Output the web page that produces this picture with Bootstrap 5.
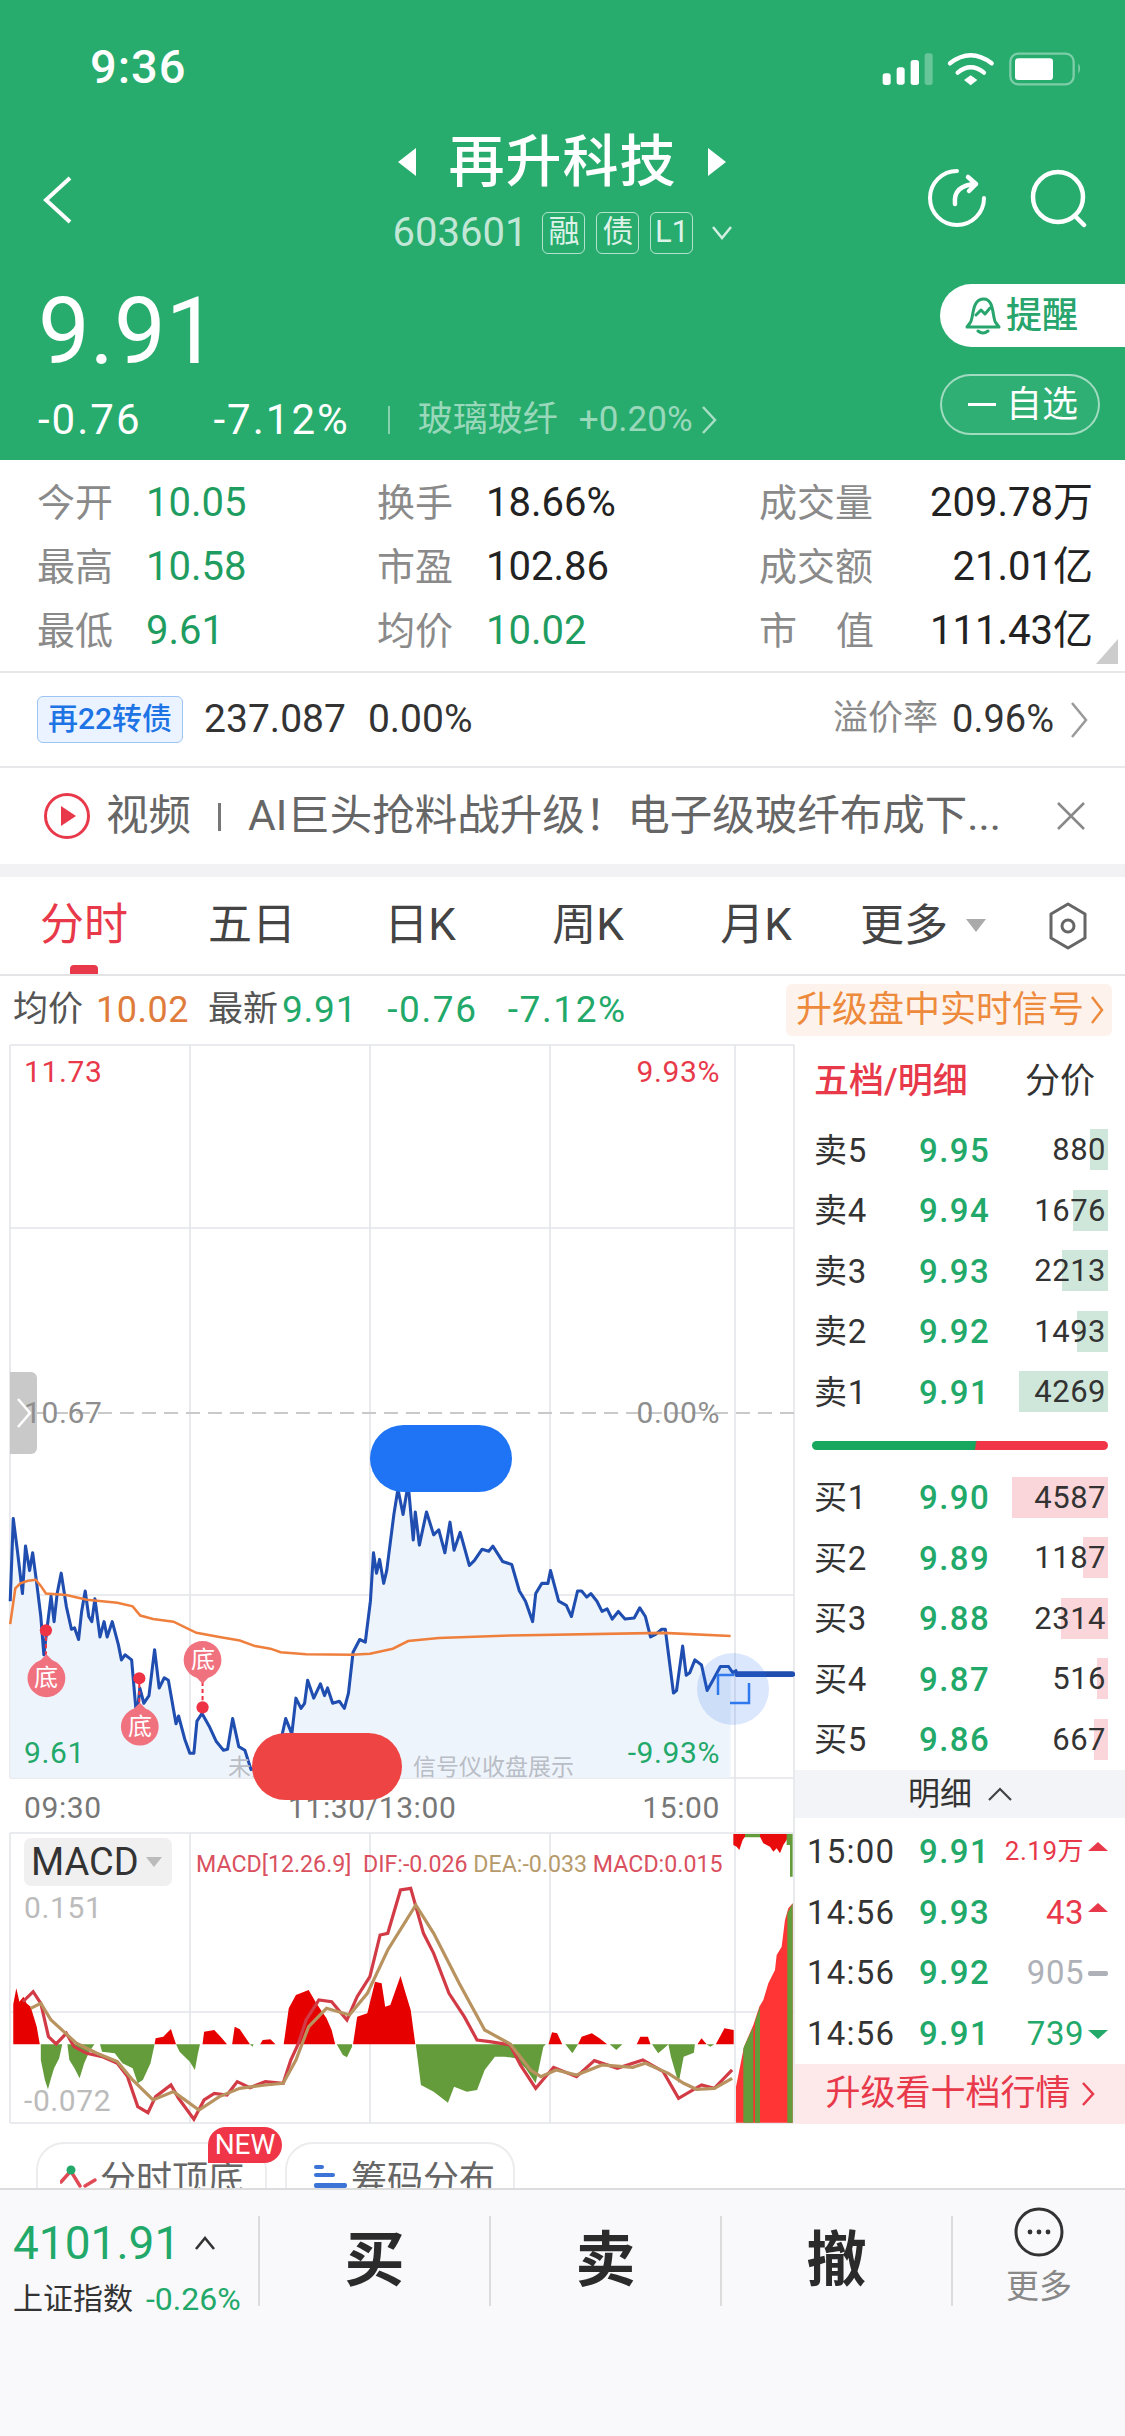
<!doctype html>
<html lang="zh-CN">
<head>
<meta charset="utf-8">
<title>再升科技</title>
<link href="https://cdn.jsdelivr.net/npm/bootstrap@5.3.0/dist/css/bootstrap.min.css" rel="stylesheet">
<style>
:root{--up:#e8394a;--down:#22a96a;--head:#27ac6e;--line:#e4e5e9}
html,body{margin:0;background:#fff}
body{width:1125px;height:2436px;overflow:hidden;font-family:"Roboto","Noto Sans CJK SC",sans-serif;color:#333}
svg{display:block}
.hd{height:460px;background:var(--head);color:#fff}
.hd-status{height:130px;padding:30px 0 0 90px}
.hd-time{font-size:47px;line-height:74px;font-weight:500;letter-spacing:1px}
.hd-nav{height:130px;display:grid;grid-template-columns:1fr auto 1fr}
.hd-back{padding:46px 0 0 42px}
.hd-title{font-size:56px;line-height:64px;font-weight:500;gap:30px;letter-spacing:1px}
.hd-code{font-size:40px;line-height:46px;margin-top:16px;color:rgba(255,255,255,.72);gap:11px}
.code-tag{width:43px;height:42px;border:1.5px solid rgba(255,255,255,.65);border-radius:6px;font-size:31px;line-height:38px;text-align:center;color:rgba(255,255,255,.85)}
.hd-icons{gap:41px;padding:38px 37px 0 0}
.hd-main{height:200px}
.hd-left{padding-left:38px}
.hd-price{font-size:92px;line-height:92px;margin-top:26px}
.hd-sub{font-size:42px;line-height:50px;margin-top:17px;letter-spacing:2px}
.hd-chg{margin-left:72px}
.hd-sep{width:2px;height:28px;background:rgba(255,255,255,.45);margin:0 28px 0 38px}
.hd-sector{font-size:35px;letter-spacing:0;color:rgba(255,255,255,.55)}
.hd-sector span{margin-left:21px}
.hd-right{width:185px;padding-top:24px;gap:27px}
.pill-alert{height:63px;border-radius:32px 0 0 32px;background:#fff;color:#27a56c;font-size:36px;font-weight:500;padding-left:25px;gap:5px}
.pill-watch{height:61px;width:160px;border:2px solid rgba(255,255,255,.55);border-radius:31px;font-size:36px;padding-left:26px;gap:10px;background:rgba(255,255,255,.04)}
.pill-dash{width:28px;height:3px;background:#fff}
.stats{height:213px;padding:11px 32px 0 37px;border-bottom:2px solid #e8e8ea;position:relative;font-size:40px}
.st-row{height:64px}
.st-c1{width:340px}
.st-c2{width:382px}
.st-lab{font-size:38px;color:#8a8a8a;width:109px;flex:none}
.st-lab3{width:115px}
.st-val{color:#222}
.st-green{color:#1f9d60}
.st-tri{position:absolute;right:7px;bottom:7px;width:0;height:0;border-left:22px solid transparent;border-bottom:25px solid #ccc}
.cb{height:95px;padding:0 37px;border-bottom:2px solid #e8e8ea;font-size:39px}
.cb-tag{height:47px;padding:0 10px;border:1.5px solid #9cc4f5;border-radius:6px;background:#eaf3ff;color:#1e74e5;font-size:30px;font-weight:500;line-height:44px;margin-right:21px}
.cb-gap{margin-left:22px}
.cb-lab{font-size:35px;color:#8a8a8a;margin-right:14px}
.cb-rate{font-size:38px}
.news{height:96px;padding:0 40px 0 44px;font-size:42.5px;color:#666}
.news-text{margin-left:16px;white-space:nowrap;flex:1;overflow:hidden}
.news-bar{display:inline-block;width:3px;height:28px;background:#777;margin:0 27px 0 27px;vertical-align:-1px}
.gap-band{height:13px;background:#f2f2f4}
.tabs{height:99px;border-bottom:2px solid #e4e4e6;font-size:44px;position:relative;flex-wrap:nowrap}
.tabs .nav-link{width:168px;padding:0;height:97px;line-height:97px;text-align:center;color:#444;position:relative}
.tabs .nav-link.active{color:var(--up)}
.tabs .nav-link.active::after{content:"";position:absolute;left:70px;bottom:0;width:28px;height:9px;border-radius:4px 4px 0 0;background:var(--up)}
.tab-more{margin-left:20px;gap:18px;color:#444}
.tab-tri{width:0;height:0;border-left:10px solid transparent;border-right:10px solid transparent;border-top:13px solid #aaa}
.tab-gear{margin-left:auto;padding-right:36px}
.info{height:68px;padding:0 13px;font-size:37px}
.info-lab{font-size:35px;color:#555}
.info-org{color:#df7c3c;margin-left:13px;font-size:36px;letter-spacing:.5px}
.info-grn{color:var(--down);margin-left:4px;letter-spacing:.8px}
.info-gap{color:var(--down);margin-left:30px;letter-spacing:1.6px}
.info-lab2{margin-left:19px}
.info-chip{margin-left:auto;height:52px;padding:0 8px 0 10px;border-radius:6px;background:#fdf3ec;color:#ee8a3c;gap:6px;line-height:52px;font-size:36px}
.market{height:1080px}
.plot{width:795px;flex:none;position:relative;height:1080px;overflow:hidden}
.plot-svg{position:absolute;left:0;top:0}
.lbl{position:absolute;font-size:30px;line-height:36px;white-space:nowrap;letter-spacing:.6px}
.lbl-up{color:var(--up)}
.lbl-dn{color:var(--down)}
.lbl-gr{color:#8e8e8e}
.lbl-ax{color:#777}
.lbl-lt{color:#bbb}
.lbl-wm{color:#b9bdc5;font-size:23px;letter-spacing:0}
.lbl-di{color:#fff;font-size:24px;letter-spacing:0}
.blob-b,.blob-r{position:absolute;border-radius:34px}
.blob-b{left:370px;top:381px;width:142px;height:67px;background:#1e74f5}
.blob-r{left:252px;top:689px;width:150px;height:67px;background:#ef4444}
.handle{position:absolute;left:10px;top:328px;width:27px;height:82px;background:#c9c9c9;border-radius:0 6px 6px 0}
.expand{position:absolute;left:697px;top:609px;width:72px;height:72px;border-radius:50%;background:rgba(40,110,235,.17)}
.macd-chip{position:absolute;left:24px;top:794px;width:148px;height:48px;border-radius:7px;background:#f0f0f1;font-size:38px;line-height:48px;padding-left:7px;color:#333;gap:7px}
.macd-tri{width:0;height:0;border-left:8px solid transparent;border-right:8px solid transparent;border-top:10px solid #bbb}
.macd-leg{position:absolute;left:196px;top:806px;font-size:23.2px;line-height:28px;white-space:nowrap;color:#d9505e}
.macd-leg b{font-weight:400;color:#b69a6c}
.book{width:330px;flex:none}
.book-hd{height:76px;padding:0 30px 0 19px;font-size:35px;line-height:76px}
.book-act{color:var(--up);font-weight:500}
.ob{height:60.6px;padding:0 19px 0 19px;font-size:33px}
.ob-side{width:105px;flex:none;color:#333;letter-spacing:.8px}
.ob-price{color:var(--down);letter-spacing:1.4px;font-size:33px;font-weight:500}
.ob-vol{margin-left:auto;position:relative;letter-spacing:.5px;font-size:31px}
.ob-vol span{position:relative}
.ob-bar{position:absolute;right:-2px;top:50%;height:41px;margin-top:-21px}
.bar-s{background:#cfe7da}
.bar-b{background:#fad6da}
.split{height:45px;padding:18px 17px 0 17px}
.split-in{height:9px;border-radius:5px;background:linear-gradient(100deg,#17a75f 0 55%,#ef3547 55.5%)}
.band{height:48px;background:#f3f4f7;font-size:32px;gap:16px;color:#333}
.tk-list{padding-top:3px}
.tk{height:60.75px;padding:0 17px 0 12px;font-size:33px}
.tk-time{width:112px;flex:none;letter-spacing:1.2px}
.tk-vol{margin-left:auto;margin-right:4px;letter-spacing:.5px}
.tk-sm{font-size:26px}
.tk-u{color:var(--up)}
.tk-d{color:var(--down)}
.tk-n{color:#aeb1b7}
.t-up,.t-dn{width:0;height:0;border-left:10px solid transparent;border-right:10px solid transparent}
.t-up{border-bottom:9px solid var(--up);margin-bottom:10px}
.t-dn{border-top:9px solid var(--down);margin-top:2px}
.t-fl{width:20px;height:5px;background:#aeb1b7;border-radius:2px}
.upsell{height:60px;background:#fde8ea;color:var(--up);font-size:35px;gap:10px}
.tools{height:64px;padding:18px 0 0 36px;position:relative;gap:18px;overflow:hidden;align-items:flex-start}
.tool{height:70px;border:2px solid #ececee;border-radius:28px 28px 0 0;font-size:36px;color:#666;line-height:44px;flex:none;position:relative}
.tool svg{margin-top:20px;flex:none}
.tool span{margin-top:14px;white-space:nowrap}
.tool-a{width:231px;padding-left:22px}
.tool-b{width:230px;padding-left:27px;gap:3px}
.tool-new{position:absolute;left:208px;top:3px;width:74px;height:36px;background:#ef3547;border-radius:18px 18px 18px 0;color:#fff;font-size:28px;line-height:36px;text-align:center}
.foot{height:248px;background:#f9f9fb;border-top:2px solid #dcdcdc;padding-top:26px}
.ft-idx{width:258px;flex:none;height:90px;padding-left:13px}
.ft-num{font-size:46px;line-height:52px;color:var(--down);gap:14px;margin-top:1px}
.ft-sub{font-size:30px;line-height:40px;color:#333;margin-top:10px;white-space:nowrap;gap:13px}
.ft-sub span{color:var(--down);font-size:32px}
.ft-act{height:90px;border-left:2px solid #dcdcdc;font-size:60px;font-weight:700;color:#2b2b2b;width:231px;flex:none}
.ft-more{height:90px;border-left:2px solid #dcdcdc;flex:1;font-size:33px;color:#888;line-height:38px;margin:0}
.ft-more svg{margin-top:-9px;margin-bottom:11px}
</style>
</head>
<body>
<header class="hd">
  <div class="hd-status d-flex justify-content-between">
    <div class="hd-time">9:36</div>
    <svg width="245" height="60" viewBox="0 0 735 180" fill="#fff"><rect x="8" y="130" width="24" height="35" rx="8"/><rect x="50" y="112" width="24" height="52" rx="8"/><rect x="92" y="90" width="25" height="75" rx="8"/><rect x="134" y="70" width="24" height="95" rx="8" opacity=".3"/><g fill="none" stroke="#fff" stroke-width="13" stroke-linecap="round"><path d="M210 100Q272 52 335 100"/><path d="M233 128Q272 96 312 128"/></g><path d="M252 150 272 136 292 150 272 166Z"/><rect x="391" y="71" width="190" height="92" rx="24" fill="none" stroke="#fff" stroke-opacity=".4" stroke-width="7"/><rect x="405" y="85" width="114" height="65" rx="10"/><path d="M595 100Q606 115 595 132Z" opacity=".4"/></svg>
  </div>
  <div class="hd-nav">
    <div class="hd-back"><svg width="32" height="48" viewBox="0 0 32 48"><path d="M28 2 4 24 28 46" fill="none" stroke="#fff" stroke-width="4"/></svg></div>
    <div class="text-center">
      <div class="hd-title d-flex align-items-center justify-content-center">
        <svg width="20" height="30" viewBox="0 0 20 30"><path d="M0 15 18 1V29Z" fill="#fff"/></svg>
        <span>再升科技</span>
        <svg width="20" height="30" viewBox="0 0 20 30"><path d="M20 15 2 1V29Z" fill="#fff"/></svg>
      </div>
      <div class="hd-code d-flex align-items-center justify-content-center">
        <span class="me-1">603601</span>
        <span class="code-tag">融</span><span class="code-tag">债</span><span class="code-tag">L1</span>
        <svg class="ms-2" width="20" height="14" viewBox="0 0 20 14"><path d="M1 1 10 12 19 1" fill="none" stroke="rgba(255,255,255,.8)" stroke-width="2.5"/></svg>
      </div>
    </div>
    <div class="hd-icons d-flex justify-content-end align-items-start">
      <svg width="60" height="60" viewBox="0 0 60 60" fill="none" stroke="#fff" stroke-width="4" stroke-linecap="round" stroke-linejoin="round"><path d="M30 3A27 27 0 1 0 57 30"/><path d="M28 36Q26 17 49 16M41 9 49 16 42 23" stroke-width="4.5"/></svg>
      <svg width="60" height="60" viewBox="0 0 60 60" fill="none" stroke="#fff" stroke-width="4.5" stroke-linecap="round"><circle cx="30" cy="29" r="25"/><path d="M47 48 56 57"/></svg>
    </div>
  </div>
  <div class="hd-main d-flex justify-content-between">
    <div class="hd-left">
      <div class="hd-price">9.91</div>
      <div class="hd-sub d-flex align-items-center">
        <span>-0.76</span><span class="hd-chg">-7.12%</span><i class="hd-sep"></i>
        <div class="hd-sector d-flex align-items-center">玻璃玻纤<span>+0.20%</span>
          <svg class="ms-2" width="16" height="30" viewBox="0 0 16 30"><path d="M2 2 14 15 2 28" fill="none" stroke="rgba(255,255,255,.6)" stroke-width="2.5"/></svg>
        </div>
      </div>
    </div>
    <div class="hd-right d-flex flex-column">
      <div class="pill-alert d-flex align-items-center">
        <svg width="36" height="40" viewBox="0 0 36 40" fill="none" stroke="#27a56c" stroke-width="3" stroke-linecap="round" stroke-linejoin="round"><path d="M5 27C9 23 6 4 18 3S27 23 31 27L34 31H2Z"/><path d="M11 19 16 14 20 18 25 12M13 35Q18 39 23 35"/></svg>
        <span>提醒</span>
      </div>
      <div class="pill-watch d-flex align-items-center"><i class="pill-dash"></i><span>自选</span></div>
    </div>
  </div>
</header>

<section class="stats">
  <div class="st-row d-flex align-items-center">
    <div class="st-c1 d-flex align-items-center"><span class="st-lab">今开</span><span class="st-green">10.05</span></div>
    <div class="st-c2 d-flex align-items-center"><span class="st-lab">换手</span><span class="st-val">18.66%</span></div>
    <div class="flex-fill d-flex align-items-center justify-content-between"><span class="st-lab st-lab3">成交量</span><span class="st-val">209.78万</span></div>
  </div>
  <div class="st-row d-flex align-items-center">
    <div class="st-c1 d-flex align-items-center"><span class="st-lab">最高</span><span class="st-green">10.58</span></div>
    <div class="st-c2 d-flex align-items-center"><span class="st-lab">市盈</span><span class="st-val">102.86</span></div>
    <div class="flex-fill d-flex align-items-center justify-content-between"><span class="st-lab st-lab3">成交额</span><span class="st-val">21.01亿</span></div>
  </div>
  <div class="st-row d-flex align-items-center">
    <div class="st-c1 d-flex align-items-center"><span class="st-lab">最低</span><span class="st-green">9.61</span></div>
    <div class="st-c2 d-flex align-items-center"><span class="st-lab">均价</span><span class="st-green">10.02</span></div>
    <div class="flex-fill d-flex align-items-center justify-content-between"><span class="st-lab st-lab3 d-flex justify-content-between"><span>市</span><span>值</span></span><span class="st-val">111.43亿</span></div>
  </div>
  <i class="st-tri"></i>
</section>

<section class="cb d-flex align-items-center">
  <span class="cb-tag">再22转债</span><span>237.087</span><span class="cb-gap">0.00%</span>
  <span class="cb-lab ms-auto">溢价率</span><span class="cb-rate">0.96%</span>
  <svg class="ms-3" width="18" height="38" viewBox="0 0 18 38"><path d="M2 2 16 19 2 36" fill="none" stroke="#999" stroke-width="2.5"/></svg>
</section>

<section class="news d-flex align-items-center">
  <svg width="46" height="46" viewBox="0 0 46 46" class="flex-none"><circle cx="23" cy="23" r="21.5" fill="none" stroke="#e8394a" stroke-width="3"/><path d="M17 13 32 23 17 33Z" fill="#e8394a"/></svg>
  <div class="news-text">视频<i class="news-bar"></i>AI巨头抢料战升级！电子级玻纤布成下...</div>
  <svg width="28" height="28" viewBox="0 0 28 28" class="ms-2"><path d="M1 1 27 27M27 1 1 27" stroke="#888" stroke-width="2.5"/></svg>
</section>
<div class="gap-band"></div>

<nav class="tabs nav align-items-center">
  <a class="nav-link active" href="#">分时</a>
  <a class="nav-link" href="#">五日</a>
  <a class="nav-link" href="#">日K</a>
  <a class="nav-link" href="#">周K</a>
  <a class="nav-link" href="#">月K</a>
  <div class="tab-more d-flex align-items-center"><span>更多</span><i class="tab-tri"></i></div>
  <div class="tab-gear"><svg width="42" height="48" viewBox="0 0 42 48" fill="none" stroke="#666" stroke-width="3"><path d="M21 2 38 12V36L21 46 4 36V12Z" stroke-linejoin="round"/><circle cx="21" cy="24" r="6"/></svg></div>
</nav>

<section class="info d-flex align-items-center">
  <span class="info-lab">均价</span><span class="info-org">10.02</span>
  <span class="info-lab info-lab2">最新</span><span class="info-grn">9.91</span>
  <span class="info-gap">-0.76</span><span class="info-gap">-7.12%</span>
  <div class="info-chip d-flex align-items-center"><span>升级盘中实时信号</span>
    <svg width="14" height="30" viewBox="0 0 14 30"><path d="M2 2 12 15 2 28" fill="none" stroke="#ee8a3c" stroke-width="2.5"/></svg></div>
</section>

<section class="market d-flex">
  <div class="plot">
    <svg class="plot-svg" width="795" height="1080" viewBox="0 1044 795 1080">
      <g stroke="#e4e5e9" stroke-width="1.6" fill="none">
        <path d="M10 1045H794M10 1228H794M10 1595H794M10 1778H794M10 1833H794M10 2012H794M10 2123H794"/>
        <path d="M10 1045V1778M190 1045V1778M370 1045V1778M550 1045V1778M735 1045V2123M794 1045V2123M10 1833V2123M190 1833V2123M370 1833V2123M550 1833V2123"/>
      </g>
      <path d="M10 1413H794" stroke="#c9c9c9" stroke-width="2" stroke-dasharray="14 8"/>
      <g transform="translate(0 1040) scale(.5102)">
        <path fill="#eef4fc" d="M20 1446V1100L26 938 34 1000 44 1085 50 992 58 1040 64 1005 72 1065 80 1130 86 1205 92 1155 100 1090 106 1140 112 1085 120 1045 130 1110 140 1155 146 1152 154 1175 160 1120 167 1080 174 1130 180 1140 186 1095 196 1170 204 1140 210 1170 220 1140 232 1185 238 1215 245 1205 258 1215 268 1330 274 1270 282 1300 292 1285 303 1195 312 1270 322 1250 330 1255 345 1340 350 1325 362 1370 372 1398 380 1398 386 1335 396 1320 410 1345 424 1375 438 1392 446 1390 456 1330 468 1385 480 1392 492 1430 540 1420 560 1330 572 1360 580 1290 590 1310 597 1300 603 1255 615 1290 628 1262 636 1285 642 1270 652 1300 665 1296 675 1310 683 1280 692 1200 705 1175 716 1180 726 1100 732 1005 738 1045 744 1018 752 1065 758 1040 772 930 780 880 790 930 800 870 810 980 814 925 822 990 836 925 850 970 860 960 872 1005 882 945 890 1000 902 965 920 1030 930 1020 945 998 958 1002 966 992 985 1022 1003 1028 1018 1080 1030 1100 1044 1140 1050 1085 1062 1065 1074 1065 1079 1040 1095 1100 1110 1108 1120 1130 1132 1080 1140 1080 1150 1092 1158 1085 1170 1100 1180 1120 1190 1115 1200 1135 1212 1120 1225 1135 1243 1133 1254 1113 1265 1130 1275 1170 1285 1165 1297 1155 1304 1155 1320 1280 1326 1275 1338 1188 1345 1245 1352 1240 1362 1215 1375 1225 1386 1275 1400 1250 1412 1228 1428 1228 1432 1240V1446Z"/>
        <path fill="none" stroke="#1f4eb0" stroke-width="6" stroke-linejoin="round" d="M20 1100L26 938 34 1000 44 1085 50 992 58 1040 64 1005 72 1065 80 1130 86 1205 92 1155 100 1090 106 1140 112 1085 120 1045 130 1110 140 1155 146 1152 154 1175 160 1120 167 1080 174 1130 180 1140 186 1095 196 1170 204 1140 210 1170 220 1140 232 1185 238 1215 245 1205 258 1215 268 1330 274 1270 282 1300 292 1285 303 1195 312 1270 322 1250 330 1255 345 1340 350 1325 362 1370 372 1398 380 1398 386 1335 396 1320 410 1345 424 1375 438 1392 446 1390 456 1330 468 1385 480 1392 492 1430 540 1420 560 1330 572 1360 580 1290 590 1310 597 1300 603 1255 615 1290 628 1262 636 1285 642 1270 652 1300 665 1296 675 1310 683 1280 692 1200 705 1175 716 1180 726 1100 732 1005 738 1045 744 1018 752 1065 758 1040 772 930 780 880 790 930 800 870 810 980 814 925 822 990 836 925 850 970 860 960 872 1005 882 945 890 1000 902 965 920 1030 930 1020 945 998 958 1002 966 992 985 1022 1003 1028 1018 1080 1030 1100 1044 1140 1050 1085 1062 1065 1074 1065 1079 1040 1095 1100 1110 1108 1120 1130 1132 1080 1140 1080 1150 1092 1158 1085 1170 1100 1180 1120 1190 1115 1200 1135 1212 1120 1225 1135 1243 1133 1254 1113 1265 1130 1275 1170 1285 1165 1297 1155 1304 1155 1320 1280 1326 1275 1338 1188 1345 1245 1352 1240 1362 1215 1375 1225 1386 1275 1400 1250 1412 1228 1428 1228 1436 1240 1445 1235"/>
        <path d="M1445 1243H1553" stroke="#1f4eb0" stroke-width="11" stroke-linecap="round"/>
        <path fill="none" stroke="#ef7f3d" stroke-width="5" d="M20 1145 30 1075 40 1065 55 1060 70 1058 80 1070 90 1085 130 1088 170 1097 230 1103 260 1110 275 1128 300 1135 340 1140 385 1162 430 1170 470 1177 500 1188 530 1193 550 1200 600 1204 690 1205 725 1203 770 1193 800 1178 860 1172 1000 1167 1300 1162 1432 1168"/>
        <g fill="#ee3344"><circle cx="90" cy="1157" r="12"/><circle cx="273" cy="1251" r="12"/><circle cx="397" cy="1308" r="12"/></g>
        <g stroke="#ee3344" stroke-width="4" stroke-dasharray="8 6"><path d="M90 1170V1205M273 1262V1300M397 1258V1296"/></g>
        <g fill="#f0727f"><circle cx="91" cy="1251" r="37"/><circle cx="274" cy="1346" r="37"/><circle cx="397" cy="1215" r="37"/><path d="M75 1220 91 1204 107 1220ZM258 1315 274 1299 290 1315ZM381 1245 397 1262 413 1245Z"/></g>
      </g>
      <g transform="translate(0 1820) scale(.5102 .3333)">
        <g fill="#e60000">
          <path d="M26 673V553L32 505 38 545 46 530 52 550 60 560 68 600 72 620 78 673Z"/><path d="M303 673 305 655 320 650 335 627 340 650 345 673Z"/><path d="M397 673 400 635 420 630 435 655 445 673Z"/><path d="M455 673 460 620 470 628 480 650 490 673Z"/><path d="M510 673 515 660 530 658 540 673Z"/><path d="M556 673 566 565 580 525 605 510 620 550 640 595 650 630 657 673Z"/><path d="M692 673 700 590 720 580 735 485 748 490 755 560 765 555 785 468 795 520 805 570 814 673Z"/><path d="M1075 673 1082 637 1092 640 1102 673Z"/><path d="M1133 673 1140 650 1160 640 1175 655 1190 673Z"/><path d="M1248 673 1255 650 1270 650 1275 673Z"/><path d="M1367 673 1375 655 1385 673Z"/><path d="M1403 673 1420 625 1438 630V673Z"/>
        </g>
        <g fill="#649c3b">
          <path d="M80 673V720L88 780 94 808 100 775 106 745 116 715 122 673Z"/><path d="M132 673 136 720 146 745 156 775 165 730 175 695 185 673Z"/><path d="M196 673 200 695 225 700 240 730 260 745 270 790 280 780 295 730 303 673Z"/><path d="M345 673 352 695 372 725 382 750 388 700 392 673Z"/><path d="M490 673 495 680 497 673Z"/><path d="M660 673 672 705 680 712 690 680V673Z"/><path d="M815 673 825 795 850 815 878 848 890 800 915 815 935 810 950 750 970 710 990 710 1010 715 1030 745 1050 790 1065 680 1070 673Z"/><path d="M1108 673 1122 700 1133 673Z"/><path d="M1195 673 1208 690 1220 673Z"/><path d="M1278 673 1290 700 1305 680 1310 673Z"/><path d="M1310 673 1315 710 1330 790 1340 710 1360 698 1362 673Z"/><path d="M1385 673 1392 680 1400 673Z"/>
        </g>
        <path fill="none" stroke="#d23b46" stroke-width="3.2" vector-effect="non-scaling-stroke" d="M45 545 65 515 80 550 95 650 110 672 130 640 145 680 170 700 200 710 230 730 250 770 270 860 290 878 305 830 335 795 350 835 380 898 400 840 420 820 445 825 465 785 490 803 520 785 555 790 570 720 585 670 600 600 625 540 650 545 680 600 700 530 725 470 745 345 760 340 785 210 805 205 830 340 850 400 880 520 910 590 935 660 960 665 1000 675 1020 735 1050 805 1085 742 1130 770 1165 722 1210 745 1260 720 1300 755 1330 835 1375 795 1400 805 1435 750"/>
        <path fill="none" stroke="#b8925f" stroke-width="3.2" vector-effect="non-scaling-stroke" d="M60 565 80 550 100 600 125 635 150 670 190 700 230 725 260 780 300 840 340 815 390 870 430 830 470 805 520 795 555 790 580 720 605 620 640 565 685 585 720 520 760 390 815 255 850 340 900 490 950 630 1000 672 1040 750 1060 770 1090 750 1130 765 1180 735 1240 742 1265 730 1310 760 1340 790 1365 808 1400 805 1435 775"/>
      </g>
      <g transform="translate(720 1820) scale(.3333)">
        <path fill="#e80c0c" d="M40 42V75L50 80 58 90 68 60 75 50H120L130 70 150 80 160 95 170 85 180 100 190 75 200 60 205 42Z"/>
        <path fill="#649c3b" d="M75 42H120V52H75ZM200 42H218V170H210V75H200Z"/>
        <path fill="#ff3434" d="M48 908V800L60 740 72 680 100 615 118 560 130 540 145 490 165 450 170 405 185 380 195 300 205 265 218 250V908Z"/>
        <path fill="#649c3b" d="M70 908V685L100 620V908ZM105 908V605L120 560V908ZM202 908V280L218 250V908Z"/>
      </g>
    </svg>
    <div class="handle d-flex align-items-center justify-content-center"><svg width="16" height="30" viewBox="0 0 16 30"><path d="M2 1 14 15 2 29" fill="none" stroke="#fff" stroke-width="2.5"/></svg></div>
    <span class="lbl lbl-up" style="left:24px;top:10px">11.73</span>
    <span class="lbl lbl-up" style="right:75px;top:10px">9.93%</span>
    <span class="lbl lbl-gr" style="left:24px;top:351px">10.67</span>
    <span class="lbl lbl-gr" style="right:75px;top:351px">0.00%</span>
    <span class="lbl lbl-dn" style="left:24px;top:691px">9.61</span>
    <span class="lbl lbl-dn" style="right:75px;top:691px">-9.93%</span>
    <span class="lbl lbl-wm" style="left:228px;top:706px">未开通</span>
    <span class="lbl lbl-wm" style="left:413px;top:706px">信号仪收盘展示</span>
    <span class="lbl lbl-ax" style="left:24px;top:746px">09:30</span>
    <span class="lbl lbl-ax" style="left:288px;top:746px">11:30/13:00</span>
    <span class="lbl lbl-ax" style="right:75px;top:746px">15:00</span>
    <span class="lbl lbl-di" style="left:34px;top:616px">底</span>
    <span class="lbl lbl-di" style="left:128px;top:665px">底</span>
    <span class="lbl lbl-di" style="left:191px;top:598px">底</span>
    <i class="blob-b"></i><i class="blob-r"></i>
    <div class="expand"><svg width="72" height="72" viewBox="0 0 72 72" fill="none" stroke="#2f78ee" stroke-width="2.5"><path d="M21 42V22H37M52 30V50H33"/></svg></div>
    <div class="macd-chip d-flex align-items-center"><span>MACD</span><i class="macd-tri"></i></div>
    <div class="macd-leg">MACD[12.26.9]&nbsp; DIF:-0.026 <b>DEA:-0.033</b> MACD:0.015</div>
    <span class="lbl lbl-lt" style="left:24px;top:846px">0.151</span>
    <span class="lbl lbl-lt" style="left:24px;top:1039px">-0.072</span>
  </div>

  <aside class="book d-flex flex-column">
    <div class="book-hd d-flex justify-content-between"><span class="book-act">五档/明细</span><span>分价</span></div>
    <div class="ob d-flex align-items-center"><span class="ob-side">卖5</span><span class="ob-price">9.95</span><div class="ob-vol"><i class="ob-bar bar-s" style="width:18px"></i><span>880</span></div></div>
    <div class="ob d-flex align-items-center"><span class="ob-side">卖4</span><span class="ob-price">9.94</span><div class="ob-vol"><i class="ob-bar bar-s" style="width:35px"></i><span>1676</span></div></div>
    <div class="ob d-flex align-items-center"><span class="ob-side">卖3</span><span class="ob-price">9.93</span><div class="ob-vol"><i class="ob-bar bar-s" style="width:46px"></i><span>2213</span></div></div>
    <div class="ob d-flex align-items-center"><span class="ob-side">卖2</span><span class="ob-price">9.92</span><div class="ob-vol"><i class="ob-bar bar-s" style="width:31px"></i><span>1493</span></div></div>
    <div class="ob d-flex align-items-center"><span class="ob-side">卖1</span><span class="ob-price">9.91</span><div class="ob-vol"><i class="ob-bar bar-s" style="width:89px"></i><span>4269</span></div></div>
    <div class="split"><div class="split-in"></div></div>
    <div class="ob d-flex align-items-center"><span class="ob-side">买1</span><span class="ob-price">9.90</span><div class="ob-vol"><i class="ob-bar bar-b" style="width:96px"></i><span>4587</span></div></div>
    <div class="ob d-flex align-items-center"><span class="ob-side">买2</span><span class="ob-price">9.89</span><div class="ob-vol"><i class="ob-bar bar-b" style="width:25px"></i><span>1187</span></div></div>
    <div class="ob d-flex align-items-center"><span class="ob-side">买3</span><span class="ob-price">9.88</span><div class="ob-vol"><i class="ob-bar bar-b" style="width:47px"></i><span>2314</span></div></div>
    <div class="ob d-flex align-items-center"><span class="ob-side">买4</span><span class="ob-price">9.87</span><div class="ob-vol"><i class="ob-bar bar-b" style="width:11px"></i><span>516</span></div></div>
    <div class="ob d-flex align-items-center"><span class="ob-side">买5</span><span class="ob-price">9.86</span><div class="ob-vol"><i class="ob-bar bar-b" style="width:14px"></i><span>667</span></div></div>
    <div class="band d-flex align-items-center justify-content-center"><span>明细</span><svg width="24" height="14" viewBox="0 0 24 14"><path d="M1 13 12 2 23 13" fill="none" stroke="#444" stroke-width="2.2"/></svg></div>
    <div class="tk-list">
      <div class="tk d-flex align-items-center"><span class="tk-time">15:00</span><span class="ob-price">9.91</span><span class="tk-vol tk-u tk-sm">2.19万</span><i class="t-up"></i></div>
      <div class="tk d-flex align-items-center"><span class="tk-time">14:56</span><span class="ob-price">9.93</span><span class="tk-vol tk-u">43</span><i class="t-up"></i></div>
      <div class="tk d-flex align-items-center"><span class="tk-time">14:56</span><span class="ob-price">9.92</span><span class="tk-vol tk-n">905</span><i class="t-fl"></i></div>
      <div class="tk d-flex align-items-center"><span class="tk-time">14:56</span><span class="ob-price">9.91</span><span class="tk-vol tk-d">739</span><i class="t-dn"></i></div>
    </div>
    <div class="upsell d-flex align-items-center justify-content-center"><span>升级看十档行情</span><svg width="14" height="26" viewBox="0 0 14 26"><path d="M2 2 12 13 2 24" fill="none" stroke="#e8394a" stroke-width="2.5"/></svg></div>
  </aside>
</section>

<section class="tools d-flex">
  <div class="tool tool-a d-flex align-items-start">
    <svg width="40" height="40" viewBox="0 0 40 40" fill="none" stroke="#e04a55" stroke-width="3.4" stroke-linecap="round"><path d="M1 18 9 9M12 9 20 22M25 22 35 16"/><circle cx="11" cy="6" r="4.5" fill="#22a96a" stroke="none"/></svg>
    <span>分时顶底</span>
  </div>
  <div class="tool tool-b d-flex align-items-start">
    <svg width="34" height="40" viewBox="0 0 34 40" fill="#3b74d6"><rect x="0" y="1" width="10" height="4" rx="2"/><rect x="0" y="9" width="21" height="4" rx="2"/><rect x="0" y="19" width="33" height="5" rx="2"/></svg>
    <span>筹码分布</span>
  </div>
  <div class="tool-new">NEW</div>
</section>

<footer class="foot d-flex align-items-start">
  <div class="ft-idx">
    <div class="ft-num d-flex align-items-center"><span>4101.91</span><svg width="22" height="16" viewBox="0 0 22 16"><path d="M2 14 11 3 20 14" fill="none" stroke="#333" stroke-width="2.6"/></svg></div>
    <div class="ft-sub d-flex align-items-center">上证指数<span>-0.26%</span></div>
  </div>
  <div class="ft-act d-flex align-items-center justify-content-center">买</div>
  <div class="ft-act d-flex align-items-center justify-content-center">卖</div>
  <div class="ft-act d-flex align-items-center justify-content-center">撤</div>
  <div class="ft-more d-flex flex-column align-items-center">
    <svg width="50" height="50" viewBox="0 0 50 50"><circle cx="25" cy="25" r="23" fill="none" stroke="#333" stroke-width="3"/><g fill="#333"><circle cx="16" cy="25" r="2.4"/><circle cx="25" cy="25" r="2.4"/><circle cx="34" cy="25" r="2.4"/></g></svg>
    <span>更多</span>
  </div>
</footer>
<script src="https://cdn.jsdelivr.net/npm/bootstrap@5.3.0/dist/js/bootstrap.bundle.min.js"></script>
</body>
</html>
